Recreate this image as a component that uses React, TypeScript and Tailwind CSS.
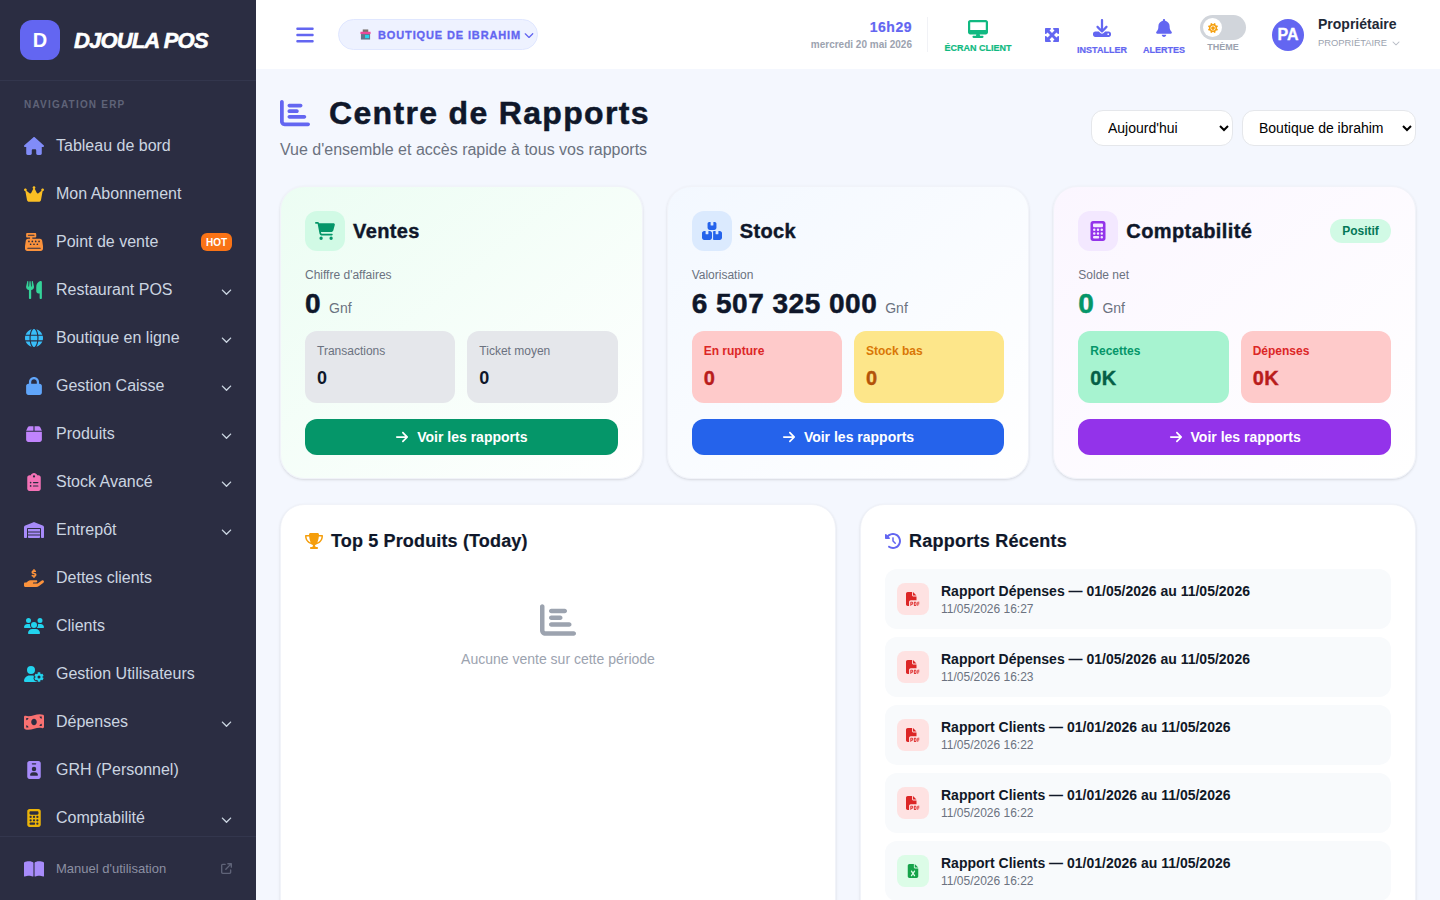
import type { ReactNode } from "react";
import {
  FaArrowRight, FaArrowUpRightFromSquare, FaBars, FaBell, FaBookOpen, FaBox, FaBoxesStacked,
  FaCalculator, FaCartShopping, FaCashRegister, FaChartBar, FaChevronDown, FaClipboardList,
  FaClockRotateLeft, FaCrown, FaDesktop, FaDownload, FaFileExcel, FaFilePdf, FaGlobe,
  FaHandHoldingDollar, FaHouse, FaIdBadge, FaLock, FaMaximize, FaMoneyBillWave, FaSun, FaTrophy,
  FaUserGear, FaUsers, FaUtensils, FaWarehouse,
} from "react-icons/fa6";

const iconBox = "w-5 h-[18px] shrink-0";

const navItems = [
  { label: "Tableau de bord", icon: <FaHouse className={`${iconBox} text-[#818cf8]`} /> },
  { label: "Mon Abonnement", icon: <FaCrown className={`${iconBox} text-[#fbbf24]`} /> },
  { label: "Point de vente", icon: <FaCashRegister className={`${iconBox} text-[#fb923c]`} />, hot: true },
  { label: "Restaurant POS", icon: <FaUtensils className={`${iconBox} text-[#34d399]`} />, sub: true },
  { label: "Boutique en ligne", icon: <FaGlobe className={`${iconBox} text-[#38bdf8]`} />, sub: true },
  { label: "Gestion Caisse", icon: <FaLock className={`${iconBox} text-[#60a5fa]`} />, sub: true },
  { label: "Produits", icon: <FaBox className={`${iconBox} text-[#c084fc]`} />, sub: true },
  { label: "Stock Avancé", icon: <FaClipboardList className={`${iconBox} text-[#f472b6]`} />, sub: true },
  { label: "Entrepôt", icon: <FaWarehouse className={`${iconBox} text-[#a78bfa]`} />, sub: true },
  { label: "Dettes clients", icon: <FaHandHoldingDollar className={`${iconBox} text-[#fb923c]`} /> },
  { label: "Clients", icon: <FaUsers className={`${iconBox} text-[#22d3ee]`} /> },
  { label: "Gestion Utilisateurs", icon: <FaUserGear className={`${iconBox} text-[#22d3ee]`} /> },
  { label: "Dépenses", icon: <FaMoneyBillWave className={`${iconBox} text-[#f87171]`} />, sub: true },
  { label: "GRH (Personnel)", icon: <FaIdBadge className={`${iconBox} text-[#a78bfa]`} /> },
  { label: "Comptabilité", icon: <FaCalculator className={`${iconBox} text-[#eab308]`} />, sub: true },
];

const reports = [
  { title: "Rapport Dépenses — 01/05/2026 au 11/05/2026", date: "11/05/2026 16:27", type: "pdf" },
  { title: "Rapport Dépenses — 01/05/2026 au 11/05/2026", date: "11/05/2026 16:23", type: "pdf" },
  { title: "Rapport Clients — 01/01/2026 au 11/05/2026", date: "11/05/2026 16:22", type: "pdf" },
  { title: "Rapport Clients — 01/01/2026 au 11/05/2026", date: "11/05/2026 16:22", type: "pdf" },
  { title: "Rapport Clients — 01/01/2026 au 11/05/2026", date: "11/05/2026 16:22", type: "xls" },
];

function Sidebar() {
  return (
    <aside className="w-64 h-full shrink-0 bg-[#2b2d42] flex flex-col">
      <div className="h-[81px] shrink-0 border-b border-[#33364d] flex items-center pl-5 gap-3.5">
        <div className="w-10 h-10 rounded-xl bg-[#6366f1] flex items-center justify-center text-white font-bold text-xl">D</div>
        <span className="text-white font-black italic text-[22px] tracking-[-0.85px] [-webkit-text-stroke:0.6px]">DJOULA POS</span>
      </div>
      <nav className="flex-1 overflow-hidden">
        <div className="pl-6 pt-[18px] pb-[11px] text-[10px] leading-[12px] font-bold tracking-[1.2px] text-[#5f6378]">NAVIGATION ERP</div>
        {navItems.map((item) => (
          <div key={item.label} className="h-12 flex items-center pl-6 pr-6 text-[#cbd5e1]">
            {item.icon}
            <span className="ml-3 flex-1 text-base">{item.label}</span>
            {item.hot && <span className="bg-[#f97316] text-white text-[10px] font-bold rounded-md w-[31px] h-[18px] flex items-center justify-center">HOT</span>}
            {item.sub && <FaChevronDown className="w-[11px] h-[11px] mt-0.5 text-[#cbd5e1]" />}
          </div>
        ))}
      </nav>
      <div className="h-16 shrink-0 border-t border-[#33364d] flex items-center pl-6 pr-6">
        <FaBookOpen className="w-5 h-[18px] text-[#a78bfa]" />
        <span className="ml-3 flex-1 text-[13px] text-[#8b90a3]">Manuel d'utilisation</span>
        <FaArrowUpRightFromSquare className="w-[11px] h-[11px] text-[#5f6378]" />
      </div>
    </aside>
  );
}

function ShopIcon() {
  return (
    <svg viewBox="0 0 12 12" className="w-[11px] h-[11px]">
      <rect x="3" y="0.5" width="6" height="3" fill="#78716c" />
      <rect x="0.5" y="3" width="11" height="2.5" fill="#ec4899" />
      <rect x="1" y="5.5" width="10" height="6" fill="#64748b" />
      <rect x="5.5" y="6.5" width="4.5" height="3.5" fill="#22d3ee" />
    </svg>
  );
}

function Action({ icon, label, color, spacing }: { icon: ReactNode; label: string; color: string; spacing: string }) {
  return (
    <div className={`flex flex-col items-center ${spacing} ${color}`}>
      {icon}
      <span className="text-[9px] leading-[10px] font-black [-webkit-text-stroke:0.2px]">{label}</span>
    </div>
  );
}

function Header() {
  return (
    <header className="h-[69px] shrink-0 bg-white flex items-center pl-10 pr-6">
      <FaBars className="w-[18px] h-5 text-[#6366f1]" />
      <div className="ml-6 w-[200px] h-[31px] rounded-full bg-[#eef2ff] border border-[#e0e7ff] flex items-center pl-[21px] text-[#6366f1]">
        <ShopIcon />
        <span className="ml-[7px] mt-0.5 text-[11px] font-bold tracking-[0.87px] whitespace-nowrap [-webkit-text-stroke:0.3px]">BOUTIQUE DE IBRAHIM</span>
        <FaChevronDown className="ml-[3px] w-[10px] h-[10px]" />
      </div>
      <div className="flex-1" />
      <div className="flex flex-col items-end pr-[15px] border-r border-[#f1f2f6] h-[35px] justify-center">
        <span className="text-sm leading-[16px] font-bold tracking-[0.5px] text-[#6366f1] [-webkit-text-stroke:0.2px]">16h29</span>
        <span className="mt-1 text-[10px] leading-[12px] font-semibold text-[#9ca3af]">mercredi 20 mai 2026</span>
      </div>
      <div className="ml-4 w-[68px] flex justify-center mt-[3px]">
        <Action icon={<FaDesktop className="w-5 h-5" />} label="ÉCRAN CLIENT" color="text-[#10b981]" spacing="gap-1" />
      </div>
      <FaMaximize className="ml-8 w-4 h-4 text-[#6366f1]" />
      <div className="ml-4 w-[52px] flex justify-center mt-[5px]">
        <Action icon={<FaDownload className="w-[18px] h-[18px]" />} label="INSTALLER" color="text-[#6366f1]" spacing="gap-2" />
      </div>
      <div className="ml-4 w-10 flex justify-center mt-[5px]">
        <Action icon={<FaBell className="w-[18px] h-[18px]" />} label="ALERTES" color="text-[#6366f1]" spacing="gap-2" />
      </div>
      <div className="ml-4 flex flex-col items-center gap-0.5 mb-[2px]">
        <div className="w-[46px] h-[25px] rounded-full bg-[#d1d5db] flex items-center pl-[3px]">
          <div className="w-[19px] h-[19px] rounded-full bg-white flex items-center justify-center">
            <FaSun className="w-[10px] h-[10px] text-[#f59e0b]" />
          </div>
        </div>
        <span className="text-[9px] leading-[10px] font-black text-[#9ca3af]">THÈME</span>
      </div>
      <div className="ml-[26px] w-8 h-8 rounded-full bg-[#6366f1] text-white font-bold text-base flex items-center justify-center [-webkit-text-stroke:0.3px]">PA</div>
      <div className="ml-3.5 w-[98px] mb-1">
        <div className="text-sm leading-[16px] font-bold text-[#1f2937]">Propriétaire</div>
        <div className="mt-[5px] flex items-center text-[9.4px] leading-[12px] text-[#9ca3af]">
          PROPRIÉTAIRE
          <FaChevronDown className="ml-[5px] w-[8px] h-[8px] text-[#b6bbc5]" />
        </div>
      </div>
    </header>
  );
}

function Cell({ label, value, bg, labelColor, valueColor, heavy }: { label: string; value: string; bg: string; labelColor: string; valueColor: string; heavy?: boolean }) {
  return (
    <div className={`h-[72px] rounded-xl p-3 ${bg}`}>
      <div className={`text-xs leading-[16px] ${labelColor}`}>{label}</div>
      <div className={`mt-[5px] leading-[28px] ${heavy ? "text-xl font-black tracking-[0.4px] [-webkit-text-stroke:0.4px]" : "text-lg font-bold"} ${valueColor}`}>{value}</div>
    </div>
  );
}

function ReportButton({ color }: { color: string }) {
  return (
    <div className={`mt-4 h-9 rounded-xl text-white text-sm font-bold flex items-center justify-center gap-2 ${color}`}>
      <FaArrowRight className="w-[14px] h-[14px]" />
      Voir les rapports
    </div>
  );
}

function Card({ gradient, children }: { gradient: string; children: ReactNode }) {
  return (
    <div className={`h-[293px] rounded-3xl border border-[#f1f3f9] shadow-sm p-6 bg-linear-to-br to-white ${gradient}`}>
      {children}
    </div>
  );
}

function CardHead({ icon, iconBg, title, extra }: { icon: ReactNode; iconBg: string; title: string; extra?: ReactNode }) {
  return (
    <div className="flex items-center h-10">
      <div className={`w-10 h-10 rounded-xl flex items-center justify-center ${iconBg}`}>{icon}</div>
      <h2 className="ml-2 flex-1 text-xl font-black tracking-[0.4px] text-[#0f172a] [-webkit-text-stroke:0.4px]">{title}</h2>
      {extra}
    </div>
  );
}

function Amount({ value, color }: { value: string; color: string }) {
  return (
    <div className="mt-[7px] flex items-baseline h-[28px]">
      <span className={`text-[28px] leading-[28px] font-black tracking-[0.5px] [-webkit-text-stroke:0.5px] ${color}`}>{value}</span>
      <span className="ml-2 text-sm text-[#6b7280]">Gnf</span>
    </div>
  );
}

function CardLabel({ text }: { text: string }) {
  return <div className="mt-4 text-xs leading-4 text-[#6b7280]">{text}</div>;
}

function Main() {
  return (
    <main className="flex-1 overflow-hidden px-6 pt-[26px]">
      <div className="flex justify-between">
        <div>
          <div className="flex items-center h-9">
            <FaChartBar className="w-[30px] h-[30px] text-[#6366f1]" />
            <h1 className="ml-[19px] text-[32px] font-black text-[#0f172a] tracking-[1.33px] [-webkit-text-stroke:0.5px]">Centre de Rapports</h1>
          </div>
          <p className="mt-[7px] text-base text-[#6b7280]">Vue d'ensemble et accès rapide à tous vos rapports</p>
        </div>
        <div className="flex gap-[9px] mt-[15px]">
          <select className="w-[142px] h-9 rounded-xl border border-[#e5e7eb] bg-white px-3 text-sm text-black">
            <option>Aujourd'hui</option>
          </select>
          <select className="w-[174px] h-9 rounded-xl border border-[#e5e7eb] bg-white px-3 text-sm text-black">
            <option>Boutique de ibrahim</option>
          </select>
        </div>
      </div>

      <div className="mt-6 grid grid-cols-3 gap-6">
        <Card gradient="from-[#ecfdf3]">
          <CardHead icon={<FaCartShopping className="w-5 h-5 text-[#059669]" />} iconBg="bg-[#d1fae5]" title="Ventes" />
          <CardLabel text="Chiffre d'affaires" />
          <Amount value="0" color="text-[#0f172a]" />
          <div className="mt-[13px] grid grid-cols-2 gap-3">
            <Cell label="Transactions" value="0" bg="bg-[#e5e7eb]" labelColor="text-[#6b7280]" valueColor="text-[#0f172a]" />
            <Cell label="Ticket moyen" value="0" bg="bg-[#e5e7eb]" labelColor="text-[#6b7280]" valueColor="text-[#0f172a]" />
          </div>
          <ReportButton color="bg-[#059669]" />
        </Card>
        <Card gradient="from-[#f3f8ff]">
          <CardHead icon={<FaBoxesStacked className="w-5 h-5 text-[#2563eb]" />} iconBg="bg-[#dbeafe]" title="Stock" />
          <CardLabel text="Valorisation" />
          <Amount value="6 507 325 000" color="text-[#0f172a]" />
          <div className="mt-[13px] grid grid-cols-2 gap-3">
            <Cell label="En rupture" value="0" bg="bg-[#fecaca]" labelColor="text-[#dc2626] font-semibold" valueColor="text-[#b91c1c]" heavy />
            <Cell label="Stock bas" value="0" bg="bg-[#fde68a]" labelColor="text-[#d97706] font-semibold" valueColor="text-[#b45309]" heavy />
          </div>
          <ReportButton color="bg-[#2563eb]" />
        </Card>
        <Card gradient="from-[#fbf6ff]">
          <CardHead
            icon={<FaCalculator className="w-5 h-5 text-[#9333ea]" />}
            iconBg="bg-[#f3e8ff]"
            title="Comptabilité"
            extra={<span className="w-[61px] h-6 rounded-full bg-[#d1fae5] text-[#047857] text-xs font-semibold flex items-center justify-center">Positif</span>}
          />
          <CardLabel text="Solde net" />
          <Amount value="0" color="text-[#059669]" />
          <div className="mt-[13px] grid grid-cols-2 gap-3">
            <Cell label="Recettes" value="0K" bg="bg-[#a7f3d0]" labelColor="text-[#059669] font-semibold" valueColor="text-[#065f46]" heavy />
            <Cell label="Dépenses" value="0K" bg="bg-[#fecaca]" labelColor="text-[#dc2626] font-semibold" valueColor="text-[#b91c1c]" heavy />
          </div>
          <ReportButton color="bg-[#9333ea]" />
        </Card>
      </div>

      <div className="mt-[25px] grid grid-cols-2 gap-6">
        <section className="h-[500px] rounded-3xl border border-[#f1f3f9] shadow-sm bg-white p-6">
          <div className="flex items-center h-[24px]">
            <FaTrophy className="w-[18px] h-[18px] text-[#f59e0b]" />
            <h3 className="ml-2 text-lg font-bold tracking-[0.15px] text-[#0f172a] [-webkit-text-stroke:0.2px]">Top 5 Produits (Today)</h3>
          </div>
          <div className="mt-[49px] flex flex-col items-center">
            <FaChartBar className="w-9 h-9 text-[#9ca3af]" />
            <p className="mt-[11px] text-sm text-[#9ca3af]">Aucune vente sur cette période</p>
          </div>
        </section>
        <section className="h-[500px] rounded-3xl border border-[#f1f3f9] shadow-sm bg-white p-6">
          <div className="flex items-center h-[24px]">
            <FaClockRotateLeft className="w-4 h-4 text-[#6366f1]" />
            <h3 className="ml-2 text-lg font-bold tracking-[0.25px] text-[#0f172a] [-webkit-text-stroke:0.2px]">Rapports Récents</h3>
          </div>
          <div className="mt-[16px] flex flex-col gap-2">
            {reports.map((r, i) => (
              <div key={i} className="h-[60px] rounded-xl bg-[#f8fafc] flex items-center pl-3">
                <div className={`w-8 h-8 rounded-lg flex items-center justify-center ${r.type === "pdf" ? "bg-[#fee2e2]" : "bg-[#dcfce7]"}`}>
                  {r.type === "pdf" ? <FaFilePdf className="w-[14px] h-[14px] text-[#dc2626]" /> : <FaFileExcel className="w-[14px] h-[14px] text-[#16a34a]" />}
                </div>
                <div className="ml-3 pt-px">
                  <div className="text-sm leading-[18px] font-semibold text-[#111827]">{r.title}</div>
                  <div className="mt-px text-xs leading-[16px] text-[#6b7280]">{r.date}</div>
                </div>
              </div>
            ))}
          </div>
        </section>
      </div>
    </main>
  );
}

export default function App() {
  return (
    <div className="w-[1440px] h-[900px] overflow-hidden flex bg-[#f4f7fe] font-['Liberation_Sans',Arial,sans-serif]">
      <Sidebar />
      <div className="flex-1 min-w-0 flex flex-col h-full">
        <Header />
        <Main />
      </div>
    </div>
  );
}
